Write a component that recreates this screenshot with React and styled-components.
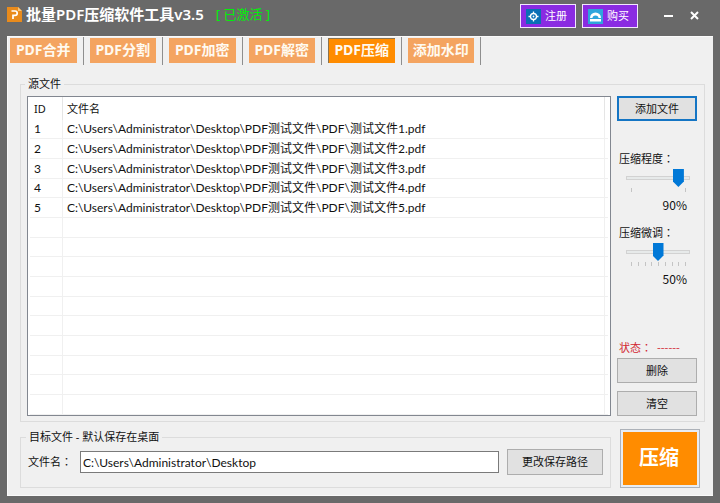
import { useState } from 'react';
import styled, { createGlobalStyle } from 'styled-components';

const GlobalStyle = createGlobalStyle`
  * {
    box-sizing: border-box;
  }

  body {
    margin: 0;
    background: #696969;
    color: #111;
    font-family: "Noto Sans", "Noto Sans CJK SC", sans-serif;
    font-size: 11px;
    line-height: 16px;
  }

  button, input {
    font: inherit;
    color: inherit;
  }
`

const Window = styled.div`
  min-height: 100vh;
  display: flex;
  flex-direction: column;
  padding: 0 7px 8px;
`

const TitleBar = styled.header`
  display: flex;
  align-items: center;
  height: 36px;
  padding: 0 12px 4px 0;

  > svg {
    margin-bottom: 4px;
  }
`

const Title = styled.h1`
  margin: 0 12px 0 4px;
  padding-bottom: 4px;
  font-size: 15px;
  line-height: 20px;
  font-weight: 600;
  color: #fff;
`

const Activated = styled.span`
  flex: 1;
  padding-bottom: 4px;
  font-size: 13px;
  color: #00f00a;
`

const TitleButton = styled.button`
  display: flex;
  align-items: center;
  gap: 4px;
  width: 56px;
  height: 24px;
  margin-right: 6px;
  padding: 0 0 0 5px;
  border: 1px solid #f3e6ff;
  background: #8a2be2;
  color: #fff;
`

const WindowButton = styled.button`
  display: flex;
  align-items: center;
  justify-content: center;
  width: 26px;
  height: 24px;
  padding: 0 0 2px;
  border: none;
  background: none;
`

const WindowButtons = styled.div`
  display: flex;
  margin-left: 11px;
  margin-right: -6px;
`

const Panel = styled.main`
  flex: 1;
  background: #f0f0f0;
  border-top: 1px solid #fafafa;
  border-left: 1px solid #fafafa;
  border-bottom: 1px solid #fafafa;
`

const Tabs = styled.nav`
  display: flex;
  gap: 6px;
  max-width: 473px;
  padding-left: 2px;
`

const TabCell = styled.div`
  flex: 1;
  height: 28px;
  padding: 1px 6px 2px 0;
  border-right: 1px solid #8e8e8e;
`

const Tab = styled.button`
  width: 100%;
  height: 25px;
  padding: 0 0 2px;
  border: 0 solid #8a7350;
  border-width: ${props => props.$active ? '1px 0 0 1px' : '0'};
  background: ${props => props.$active ? '#ff8c00' : '#f4a460'};
  color: #fffaf0;
  font-size: 14px;
  line-height: 20px;
  font-weight: 700;
  white-space: nowrap;
`

const Content = styled.div`
  padding: 11px 8px 7px 12px;
`

const Group = styled.fieldset`
  min-width: 0;
  margin: 0;
  padding: ${props => props.$padding};
  border: 1px solid #dcdcdc;
`

const Legend = styled.legend`
  margin-left: -2px;
  padding: 0 3px;
`

const Source = styled.div`
  display: flex;
  gap: 6px;
`

const ListBox = styled.div`
  flex: 1;
  min-width: 0;
  height: 320px;
  padding: 0 2px;
  overflow: hidden;
  border: 1px solid #828790;
  background: #fff;
`

const FileTable = styled.table`
  width: 100%;
  table-layout: fixed;
  border-collapse: separate;
  border-spacing: 0;

  th, td {
    padding: 0 0 0 4px;
    border-right: 1px solid #f0f0f0;
    text-align: left;
    font-weight: 400;
    white-space: nowrap;
  }

  th {
    height: 23px;
    border-right-color: #e5e5e5;
  }

  td {
    height: 20px;
    border-bottom: 1px solid #f0f0f0;
    font-family: Lato, "Noto Sans CJK SC", sans-serif;
    font-size: 12px;
  }

  tr:nth-child(3n + 1) td {
    height: 19px;
  }

  tr > :last-child {
    border-right: none;
  }
`

const IdColumn = styled.col`
  width: 33px;
`

const EndColumn = styled.col`
  width: 3px;
`

const Side = styled.div`
  display: flex;
  flex-direction: column;
  flex: 0 0 80px;
`

const Button = styled.button`
  flex: none;
  height: ${props => props.$height || 25}px;
  padding: 0 14px;
  border: ${props => props.$focused ? '2px solid #1475c4' : '1px solid #adadad'};
  background: #e1e1e1;
  color: #111;
`

const Setting = styled.div`
  display: flex;
  flex-direction: column;
  margin-top: ${props => props.$top}px;
  padding-left: 2px;
`

// the TC face centres its full-width colon
const Colon = styled.span`
  font-family: "Noto Sans CJK TC", sans-serif;
  line-height: 1;
`

const Slider = styled.input.attrs({ type: 'range' })`
  appearance: none;
  width: 64px;
  height: 18px;
  margin: 2px 0 0 7px;
  background: none;

  &::-webkit-slider-runnable-track {
    height: 4px;
    border: 1px solid #d2d2d2;
    background: #e7eaea;
  }

  &::-webkit-slider-thumb {
    appearance: none;
    width: 11px;
    height: 18px;
    margin-top: -8px;
    background: #0078d7;
    clip-path: polygon(0 0, 100% 0, 100% 70%, 50% 100%, 0 70%);
  }
`

const Ticks = styled.div`
  display: flex;
  justify-content: space-between;
  width: 55px;
  height: 4px;
  margin: 1px 0 0 12px;
`

const Tick = styled.span`
  width: 1px;
  background: #c4c4c4;
`

const Percent = styled.output`
  margin-top: 5px;
  padding-right: 10px;
  font-family: "Noto Sans CJK SC", sans-serif;
  font-size: 12px;
  text-align: right;
`

const Status = styled.div`
  margin-top: auto;
  padding-left: 2px;
  padding-bottom: 3px;
  color: #d22630;
  font-family: "Noto Sans CJK SC", sans-serif;
  white-space: pre;
`

const SideButtons = styled.div`
  display: flex;
  flex-direction: column;
  gap: 8px;
`

const Bottom = styled.div`
  display: flex;
  gap: 9px;
  padding-right: 5px;
  margin-top: 7px;

  > fieldset {
    flex: 1;
  }
`

const PathRow = styled.div`
  display: flex;
  align-items: center;
  gap: 8px;
`

const PathInput = styled.input`
  flex: 1;
  min-width: 0;
  height: 22px;
  padding: 0 2px;
  border: 1px solid #7a7a7a;
  background: #fff;
  font-family: Lato, "Noto Sans CJK SC", sans-serif;
  font-size: 12px;
`

const CompressButton = styled.button`
  flex: 0 0 80px;
  height: 59px;
  padding: 0 2px 2px 0;
  border: 1px solid #adb2b9;
  outline: 2px solid #e8edf3;
  outline-offset: -3px;
  background: #ff8c00;
  color: #fff;
  font-size: 20px;
  line-height: 24px;
  font-weight: 700;
`

const tabs = ['PDF合并', 'PDF分割', 'PDF加密', 'PDF解密', 'PDF压缩', '添加水印']
const files = [1, 2, 3, 4, 5].map(n => `C:\\Users\\Administrator\\Desktop\\PDF测试文件\\PDF\\测试文件${n}.pdf`)
const ROWS = 15

const Logo = () => (
  <svg width="15" height="15" viewBox="0 0 15 15" aria-hidden="true">
    <path d="M0 0h11l4 4v11H0z" fill="#e98b1c" />
    <path d="M11 0l4 4h-4z" fill="#f8c67c" />
    <path d="M4.500 4h3.500a2.200 2.200 0 0 1 0 4.400H6V12" fill="none" stroke="#fff" strokeWidth="1.700" />
  </svg>
)

const TargetIcon = () => (
  <svg width="15" height="15" viewBox="0 0 15 15" aria-hidden="true">
    <rect width="15" height="15" fill="#0a6fb5" />
    <circle cx="7.500" cy="7.500" r="3" fill="none" stroke="#fff" strokeWidth="1.300" />
    <circle cx="7.500" cy="7.500" r="0.900" fill="#fff" />
    <path d="M7.500 2.500v2.500M7.500 10v2.500M2.500 7.500H5M10 7.500h2.500" stroke="#fff" strokeWidth="1.300" />
  </svg>
)

const ShopIcon = () => (
  <svg width="15" height="15" viewBox="0 0 15 15" aria-hidden="true">
    <rect width="15" height="15" fill="#2fa5dc" />
    <path d="M2 9a5.500 5.500 0 0 1 11 0H10.500a3 2.500 0 0 0-6 0z" fill="#fff" />
    <path d="M2 10h11V12.500H2z" fill="#fff" />
  </svg>
)

function SliderSetting({ id, label, value, onChange, ticks, top }) {
  return (
    <Setting $top={top}>
      <label htmlFor={id}>{label}<Colon>：</Colon></label>
      <Slider id={id} min="0" max="100" value={value} onChange={e => onChange(Number(e.target.value))} />
      <Ticks>
        {Array.from({ length: ticks }, (_, i) => <Tick key={i} />)}
      </Ticks>
      <Percent htmlFor={id}>{value}%</Percent>
    </Setting>
  )
}

export default function App() {
  const [active, setActive] = useState('PDF压缩')
  const [level, setLevel] = useState(90)
  const [fine, setFine] = useState(50)
  const [list, setList] = useState(files)
  const [path, setPath] = useState('C:\\Users\\Administrator\\Desktop')

  return (
    <Window>
      <GlobalStyle />
      <TitleBar>
        <Logo />
        <Title>批量PDF压缩软件工具v3.5</Title>
        <Activated>[ 已激活 ]</Activated>
        <TitleButton><TargetIcon />注册</TitleButton>
        <TitleButton><ShopIcon />购买</TitleButton>
        <WindowButtons>
          <WindowButton aria-label="最小化">
            <svg width="9" height="9" viewBox="0 0 9 9"><path d="M0 5h9" stroke="#fff" strokeWidth="2" /></svg>
          </WindowButton>
          <WindowButton aria-label="关闭">
            <svg width="9" height="9" viewBox="0 0 9 9"><path d="M1 1l7 7M8 1L1 8" stroke="#fff" strokeWidth="2" /></svg>
          </WindowButton>
        </WindowButtons>
      </TitleBar>

      <Panel>
        <Tabs>
          {tabs.map(name => (
            <TabCell key={name}>
              <Tab $active={name === active} onClick={() => setActive(name)}>{name}</Tab>
            </TabCell>
          ))}
        </Tabs>

        <Content>
          <Group $padding="4px 7px 5px 6px">
            <Legend>源文件</Legend>
            <Source>
              <ListBox>
                <FileTable>
                  <colgroup>
                    <IdColumn />
                    <col />
                    <EndColumn />
                  </colgroup>
                  <thead>
                    <tr><th>ID</th><th>文件名</th><th /></tr>
                  </thead>
                  <tbody>
                    {Array.from({ length: ROWS }, (_, i) => (
                      <tr key={i}>
                        <td>{list[i] ? i + 1 : ''}</td>
                        <td>{list[i]}</td>
                        <td />
                      </tr>
                    ))}
                  </tbody>
                </FileTable>
              </ListBox>
              <Side>
                <Button $focused>添加文件</Button>
                <SliderSetting id="level" label="压缩程度" value={level} onChange={setLevel} ticks={2} top={30} />
                <SliderSetting id="fine" label="压缩微调" value={fine} onChange={setFine} ticks={9} top={12} />
                <Status>状态<Colon>：</Colon>  ------</Status>
                <SideButtons>
                  <Button onClick={() => setList(list.slice(0, -1))}>删除</Button>
                  <Button onClick={() => setList([])}>清空</Button>
                </SideButtons>
              </Side>
            </Source>
          </Group>

          <Bottom>
            <Group $padding="4px 7px 11px 7px">
              <Legend>目标文件 - 默认保存在桌面</Legend>
              <PathRow>
                <label htmlFor="path">文件名<Colon>：</Colon></label>
                <PathInput id="path" value={path} onChange={e => setPath(e.target.value)} />
                <Button $height={26}>更改保存路径</Button>
              </PathRow>
            </Group>
            <CompressButton>压缩</CompressButton>
          </Bottom>
        </Content>
      </Panel>
    </Window>
  )
}
